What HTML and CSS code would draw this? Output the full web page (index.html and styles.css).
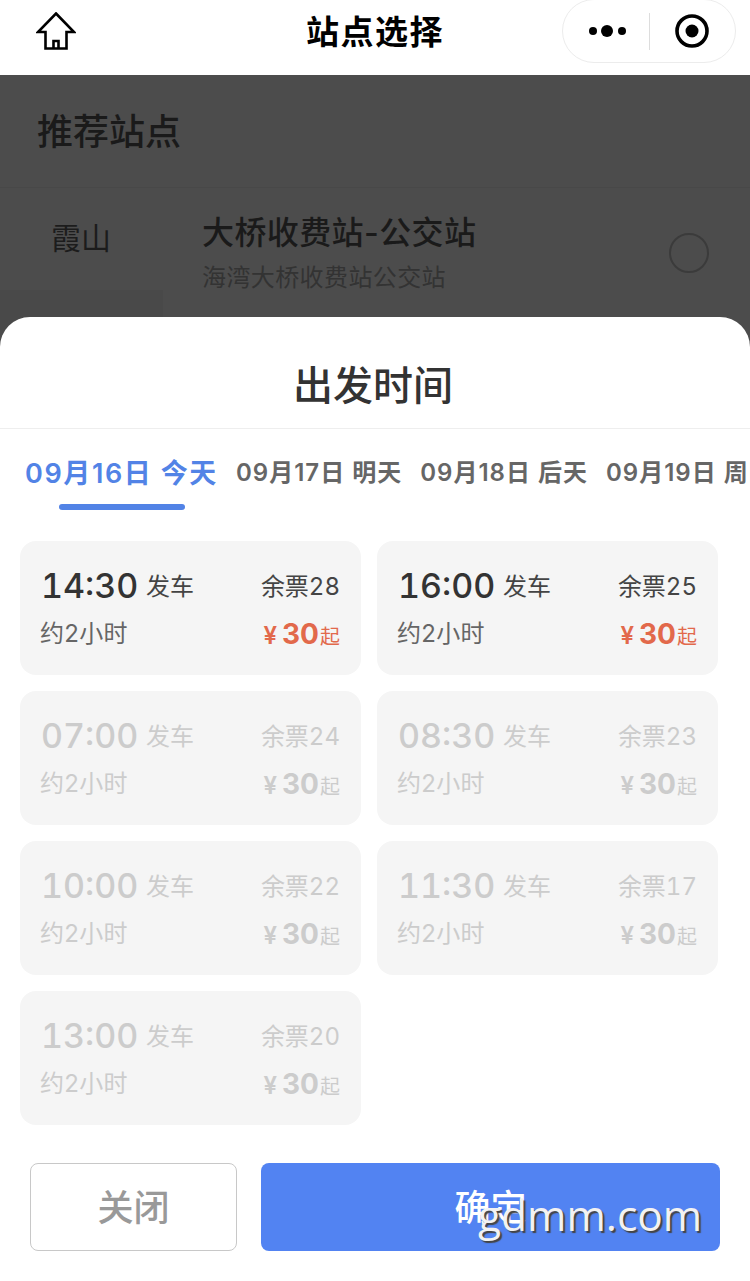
FILE: index.html
```html
<!DOCTYPE html>
<html lang="zh-CN">
<head>
<meta charset="utf-8">
<title>站点选择</title>
<link rel="stylesheet" href="styles.css">
</head>
<body>
<div class="page">
  <header class="nav">
    <svg class="home" width="40" height="38" viewBox="0 0 40 38"><path d="M20 1.500 L38 20 H30.500 V36.500 H9.500 V20 H2 Z M17.500 36.500 V29 H22.500 V36.500" fill="none" stroke="#000" stroke-width="2.600" stroke-linejoin="miter"/></svg>
    <div class="nav-title">站点选择</div>
    <div class="capsule">
      <svg width="40" height="16" viewBox="0 0 40 16"><circle cx="5" cy="8" r="4"/><circle cx="19" cy="8" r="6"/><circle cx="34" cy="8" r="4"/></svg>
      <span class="cap-line"></span>
      <svg width="36" height="36" viewBox="0 0 36 36"><circle cx="18" cy="18" r="15" fill="none" stroke="#000" stroke-width="3.600"/><circle cx="18" cy="18" r="6.500"/></svg>
    </div>
  </header>
  <main class="behind">
    <h2 class="rec">推荐站点</h2>
    <div class="station">
      <div class="side">
        <div class="side-name">霞山</div>
        <div class="side-next"></div>
      </div>
      <div class="info">
        <div class="st-name">大桥收费站-公交站</div>
        <div class="st-sub">海湾大桥收费站公交站</div>
      </div>
      <span class="radio"></span>
    </div>
  </main>
  <section class="sheet">
    <h1 class="sheet-title">出发时间</h1>
    <div class="tabs">
      <div class="tab active">09月16日 今天<span class="tab-bar"></span></div>
      <div class="tab">09月17日 明天</div>
      <div class="tab">09月18日 后天</div>
      <div class="tab">09月19日 周四</div>
    </div>
    <div class="grid">
      <div class="card">
        <div class="row"><div class="when"><span class="time">14:30</span><span class="go">发车</span></div><span class="left">余票28</span></div>
        <div class="row row2"><span class="dur">约2小时</span><span class="price"><span class="yen">¥</span><b>30</b><small>起</small></span></div>
      </div>
      <div class="card">
        <div class="row"><div class="when"><span class="time">16:00</span><span class="go">发车</span></div><span class="left">余票25</span></div>
        <div class="row row2"><span class="dur">约2小时</span><span class="price"><span class="yen">¥</span><b>30</b><small>起</small></span></div>
      </div>
      <div class="card off">
        <div class="row"><div class="when"><span class="time">07:00</span><span class="go">发车</span></div><span class="left">余票24</span></div>
        <div class="row row2"><span class="dur">约2小时</span><span class="price"><span class="yen">¥</span><b>30</b><small>起</small></span></div>
      </div>
      <div class="card off">
        <div class="row"><div class="when"><span class="time">08:30</span><span class="go">发车</span></div><span class="left">余票23</span></div>
        <div class="row row2"><span class="dur">约2小时</span><span class="price"><span class="yen">¥</span><b>30</b><small>起</small></span></div>
      </div>
      <div class="card off">
        <div class="row"><div class="when"><span class="time">10:00</span><span class="go">发车</span></div><span class="left">余票22</span></div>
        <div class="row row2"><span class="dur">约2小时</span><span class="price"><span class="yen">¥</span><b>30</b><small>起</small></span></div>
      </div>
      <div class="card off">
        <div class="row"><div class="when"><span class="time">11:30</span><span class="go">发车</span></div><span class="left">余票17</span></div>
        <div class="row row2"><span class="dur">约2小时</span><span class="price"><span class="yen">¥</span><b>30</b><small>起</small></span></div>
      </div>
      <div class="card off">
        <div class="row"><div class="when"><span class="time">13:00</span><span class="go">发车</span></div><span class="left">余票20</span></div>
        <div class="row row2"><span class="dur">约2小时</span><span class="price"><span class="yen">¥</span><b>30</b><small>起</small></span></div>
      </div>
    </div>
    <div class="actions">
      <button class="btn close">关闭</button>
      <button class="btn ok">确定</button>
    </div>
  </section>
  <div class="watermark">gdmm.com</div>
</div>
</body>
</html>
```
FILE: styles.css
```css
* { box-sizing: border-box; margin: 0; padding: 0; }
html, body { width: 750px; height: 1281px; overflow: hidden; background: #fff; }
body { font-family: Inter, "Noto Sans CJK SC", sans-serif; color: #333; }
.page { position: relative; width: 750px; height: 1281px; overflow: hidden; display: flex; flex-direction: column; }

.nav { height: 75px; flex: none; background: #fff; display: flex; align-items: center; justify-content: center; position: relative; }
.home { position: absolute; left: 36px; top: 12px; }
.nav-title { font-size: 33px; font-weight: 600; color: #000; line-height: 44px; margin-top: -12px; letter-spacing: 1.500px; }
.capsule { position: absolute; left: 562px; top: -1px; width: 174px; height: 64px; border: 1px solid #ececec; border-radius: 32px; background: #fff; display: flex; align-items: center; }
.capsule svg:first-child { margin-left: 25px; }
.cap-line { width: 1px; height: 37px; background: #ddd; margin: 0 8px 0 21px; }
.capsule svg:last-child { margin-left: 16px; }

.behind { flex: 1; background: #4c4c4c; color: #171717; }
.rec { height: 113px; padding: 34px 0 0 37px; font-size: 36px; line-height: 46px; font-weight: 500; color: #1a1a1a; border-bottom: 1px solid #484848; }
.station { display: flex; align-items: flex-start; }
.side { width: 163px; flex: none; }
.side-name { height: 102px; padding: 29px 0 0 51px; font-size: 30px; line-height: 42px; color: #1c1c1c; }
.side-next { height: 40px; background: #494949; }
.info { padding: 24px 0 0 39px; flex: 1; }
.st-name { font-size: 32px; line-height: 42px; font-weight: 500; color: #1a1a1a; letter-spacing: 0.400px; }
.st-sub { font-size: 24px; line-height: 34px; color: #333; margin-top: 7px; letter-spacing: 0.400px; }
.radio { width: 40px; height: 40px; border-radius: 50%; border: 2px solid #3b3b3b; margin: 45px 41px 0 0; flex: none; }

.sheet { position: absolute; left: 0; top: 317px; width: 750px; height: 964px; background: #fff; border-radius: 30px 30px 0 0; display: flex; flex-direction: column; }
.sheet-title { height: 112px; border-bottom: 1px solid #eee; font-size: 40px; line-height: 56px; padding: 41px 4px 0 0; text-align: center; font-weight: 500; color: #333; }
.tabs { height: 96px; display: flex; gap: 18px; padding: 28px 0 0 25px; white-space: nowrap; overflow: hidden; }
.tab { position: relative; font-size: 24px; line-height: 32px; font-weight: 600; color: #666; flex: none; letter-spacing: 1px; }
.tab.active { font-size: 27px; color: #5283e6; letter-spacing: 1.600px; line-height: 34px; }
.tab-bar { position: absolute; left: 34px; width: 126px; height: 6px; top: 47px; border-radius: 3px; background: #5283e6; }

.grid { display: grid; grid-template-columns: 341px 341px; gap: 16px; padding: 16px 0 0 20px; }
.card { height: 134px; background: #f5f5f5; border-radius: 16px; padding: 22px 21px 0 21px; color: #333; }
.row { display: flex; justify-content: space-between; align-items: center; height: 46px; }
.row2 { height: 46px; margin-top: 2px; }
.when { display: flex; align-items: center; }
.time { width: 105px; font-size: 34px; font-weight: 500; line-height: 46px; font-variant-numeric: tabular-nums; }
.go { font-size: 24px; line-height: 34px; color: #444; margin-top: 2px; }
.left { font-size: 24px; line-height: 34px; color: #444; font-variant-numeric: tabular-nums; margin-top: 2px; }
.dur { font-size: 24px; line-height: 34px; color: #666; margin-left: -1px; letter-spacing: 0.300px; }
.price { display: flex; align-items: baseline; color: #e2694b; line-height: 40px; margin-top: 2px; }
.yen { font-size: 24px; font-weight: 600; margin-right: 5px; }
.price b { font-size: 28px; font-weight: 700; }
.price small { font-size: 20px; margin-left: 1px; }
.off, .off .go, .off .left, .off .dur, .off .price { color: #ccc; }

.actions { position: absolute; left: 30px; top: 846px; width: 690px; display: flex; gap: 24px; }
.btn { height: 88px; border-radius: 8px; padding-bottom: 4px; font-family: inherit; font-size: 36px; font-weight: 500; }
.close { width: 207px; background: #fff; border: 1px solid #c8c8c8; color: #999; }
.ok { width: 459px; background: #5283f2; border: 0; color: #fff; }

.watermark { position: absolute; left: 478px; top: 1186px; font-family: "Open Sans", sans-serif; font-size: 42.500px; line-height: 58px; color: #f2f2f2; text-shadow: 2px 2px 1px #444; }
```
